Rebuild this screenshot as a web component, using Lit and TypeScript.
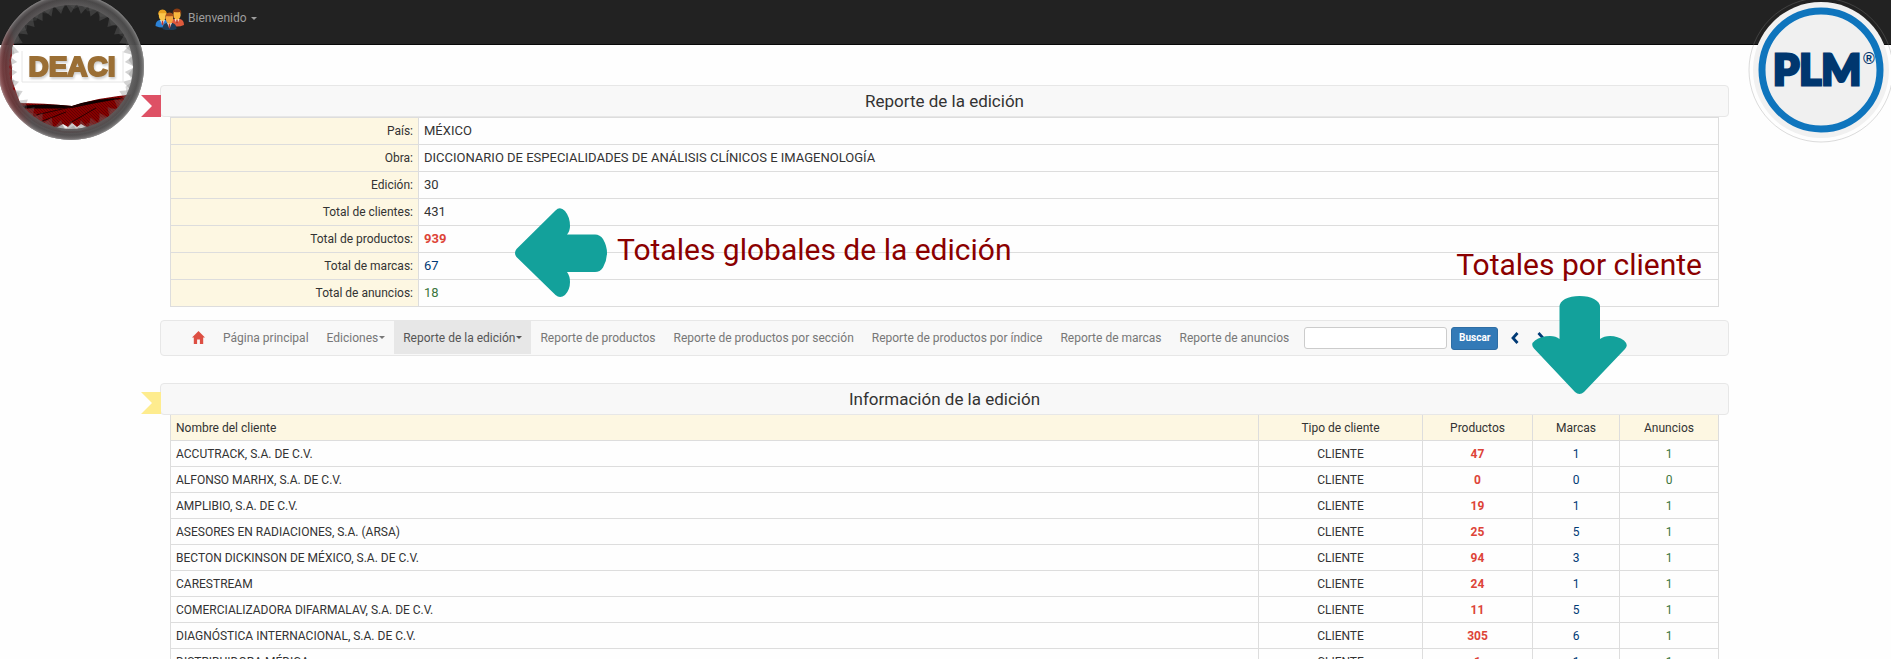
import { LitElement, html, svg, css } from "lit";
import { customElement } from "lit/decorators.js";

interface Client {
  name: string;
  products: number;
  brands: number;
  ads: number;
}

const CLIENTS: Client[] = [
  { name: "ACCUTRACK, S.A. DE C.V.", products: 47, brands: 1, ads: 1 },
  { name: "ALFONSO MARHX, S.A. DE C.V.", products: 0, brands: 0, ads: 0 },
  { name: "AMPLIBIO, S.A. DE C.V.", products: 19, brands: 1, ads: 1 },
  { name: "ASESORES EN RADIACIONES, S.A. (ARSA)", products: 25, brands: 5, ads: 1 },
  { name: "BECTON DICKINSON DE MÉXICO, S.A. DE C.V.", products: 94, brands: 3, ads: 1 },
  { name: "CARESTREAM", products: 24, brands: 1, ads: 1 },
  { name: "COMERCIALIZADORA DIFARMALAV, S.A. DE C.V.", products: 11, brands: 5, ads: 1 },
  { name: "DIAGNÓSTICA INTERNACIONAL, S.A. DE C.V.", products: 305, brands: 6, ads: 1 },
  { name: "DISTRIBUIDORA MÉDICA", products: 1, brands: 1, ads: 1 },
];

const SUMMARY = [
  { label: "País:", value: "MÉXICO", tone: "" },
  { label: "Obra:", value: "DICCIONARIO DE ESPECIALIDADES DE ANÁLISIS CLÍNICOS E IMAGENOLOGÍA", tone: "" },
  { label: "Edición:", value: "30", tone: "" },
  { label: "Total de clientes:", value: "431", tone: "" },
  { label: "Total de productos:", value: "939", tone: "red" },
  { label: "Total de marcas:", value: "67", tone: "blue" },
  { label: "Total de anuncios:", value: "18", tone: "green" },
];

const LINKS = [
  { text: "Página principal", menu: false, active: false },
  { text: "Ediciones", menu: true, active: false },
  { text: "Reporte de la edición", menu: true, active: true },
  { text: "Reporte de productos", menu: false, active: false },
  { text: "Reporte de productos por sección", menu: false, active: false },
  { text: "Reporte de productos por índice", menu: false, active: false },
  { text: "Reporte de marcas", menu: false, active: false },
  { text: "Reporte de anuncios", menu: false, active: false },
];

/** Saw-toothed inner edge of the DEACI seal. */
function teeth(cx: number, cy: number, outer: number, inner: number, count: number): string {
  const points: string[] = [];
  for (let i = 0; i < count * 2; i++) {
    const angle = (Math.PI * i) / count;
    const r = i % 2 ? inner : outer;
    points.push(`${(cx + r * Math.cos(angle)).toFixed(1)} ${(cy + r * Math.sin(angle)).toFixed(1)}`);
  }
  return `M${points.join("L")}Z`;
}

const disc = (cx: number, cy: number, r: number) =>
  `M${cx - r} ${cy}a${r} ${r} 0 1 0 ${2 * r} 0a${r} ${r} 0 1 0 ${-2 * r} 0Z`;

const deaciLogo = html`<svg class="deaci" width="146" height="142" viewBox="0 0 146 142" role="img" aria-label="DEACI">
  <defs>
    <linearGradient id="ring" x1="0" y1="0.55" x2="1" y2="0.35">
      <stop offset="0" stop-color="#8a2a2e" />
      <stop offset="0.07" stop-color="#6b2225" />
      <stop offset="0.16" stop-color="#4c4446" />
      <stop offset="1" stop-color="#4e4e4e" />
    </linearGradient>
    <radialGradient id="rim" cx="71" cy="67" r="74" gradientUnits="userSpaceOnUse">
      <stop offset="0.84" stop-color="#777" stop-opacity="0.35" />
      <stop offset="0.92" stop-color="#444" stop-opacity="0.3" />
      <stop offset="0.96" stop-color="#888" stop-opacity="0.35" />
      <stop offset="1" stop-color="#ccc" stop-opacity="0.7" />
    </radialGradient>
    <pattern id="weave" width="3" height="3" patternUnits="userSpaceOnUse">
      <rect width="3" height="3" fill="#860000" />
      <path d="M0 0L3 3" stroke="#5c0000" stroke-width="0.8" />
    </pattern>
    <clipPath id="seal"><circle cx="71" cy="67" r="66" /></clipPath>
  </defs>
  <g clip-path="url(#seal)">
    <path d="M0 22L10 24L14 45L11 60L14 85L22 103L8 110L0 100Z" fill="#850d10" />
    <path d="M12 45h128v50L72 106L20 103L12 80Z" fill="#fff" />
    <path d="M14 103Q45 103 72 106Q100 97 136 94V142H14Z" fill="url(#weave)" />
    <path d="M18 106Q50 103 72 106Q95 98 125 98Q100 102 72 108Q45 109 18 108Z" fill="#100000" />
    <path d="M36 115L84 104M96 108L70 123M40 122L66 112" stroke="#2b0000" stroke-width="1" fill="none" />
    <path d="M56 128L63 124L68 127L72 123L77 127L81 124L88 128L80 131H62Z" fill="#eee" />
  </g>
  <path d="${disc(71, 67, 73)}${teeth(71, 67, 64, 54, 34)}" fill-rule="evenodd" fill="#777" fill-opacity="0.32" />
  <path d="${disc(71, 67, 73)}${teeth(71, 67, 63, 58, 27)}" fill-rule="evenodd" fill="#666" fill-opacity="0.25" />
  <path d="${disc(71, 67, 73)}${disc(71, 67, 62)}" fill-rule="evenodd" fill="url(#ring)" fill-opacity="0.88" />
  <path d="${disc(71, 67, 73)}${disc(71, 67, 62)}" fill-rule="evenodd" fill="url(#rim)" />
  <path d="M22 51V82H123V51" fill="none" stroke="#e6e6e6" />
  <text class="deaci-text" x="72" y="76" text-anchor="middle">DEACI</text>
</svg>`;

const plmLogo = html`<svg class="plm" width="146" height="144" viewBox="0 0 146 144" role="img" aria-label="PLM">
  <circle cx="73" cy="70" r="72" fill="none" stroke="#888" stroke-opacity="0.3" />
  <circle cx="73" cy="70" r="68" fill="#f1f1f1" />
  <circle cx="73" cy="70" r="59" fill="#f0f0f0" stroke="#0f75bd" stroke-width="7" />
  <text class="plm-text" x="69" y="85" text-anchor="middle">PLM</text>
  <text class="plm-mark" x="121" y="64" text-anchor="middle">®</text>
</svg>`;

const person = (x: number, y: number, hair: string, coat: string, skin: string) => svg`
  <g transform="translate(${x} ${y})">
    <path d="M-7 14Q-7 9 -3 8H3Q7 9 7 14Q0 17 -7 14Z" fill=${coat} />
    <path d="M-2.4 8L0 13.5L2.4 8Z" fill="#f3f3f3" />
    <path d="M-0.7 8.6h1.4L1 12L0 13.4L-1 12Z" fill="#c0392b" />
    <path d="M-3.6 1.5Q-3.6 -1 0 -1Q3.6 -1 3.6 1.5V4.5Q3 8.6 0 8.8Q-3 8.6 -3.6 4.5Z" fill=${skin} />
    <path d="M-4.2 3.5Q-5 -2.4 0 -2.6Q5 -2.4 4.2 3.5L3 1Q0 1.6 -3 1Z" fill=${hair} />
  </g>`;

const peopleIcon = html`<svg width="30" height="22" viewBox="0 0 30 22" aria-hidden="true">
  ${person(7.5, 4, "#e8a020", "#2c82d6", "#fbc64b")}
  ${person(22, 3, "#8a3c12", "#dd5a3c", "#f9b63e")}
  ${person(14.5, 7, "#a8501c", "#1d3c58", "#f5a640")}
</svg>`;

const homeIcon = html`<svg width="13" height="13" viewBox="0 0 13 13" aria-hidden="true">
  <path d="M6.5 0L13 6.6H11.2V13H7.9V8.6H5.1V13H1.8V6.6H0Z" fill="#dd4f43" />
</svg>`;

const chevron = (d: string) => html`<svg width="8" height="12" viewBox="0 0 8 12" aria-hidden="true">
  <path d=${d} fill="none" stroke="#003a75" stroke-width="2.8" />
</svg>`;

@customElement("app-root")
export class AppRoot extends LitElement {
  static styles = css`
    :host {
      display: block;
      height: 100vh;
      overflow: hidden;
      background: #fefefe;
      color: #333;
      font: 12px/18px Roboto, "Noto Sans", sans-serif;
    }
    * { box-sizing: border-box; }
    a { color: inherit; text-decoration: none; }
    .top {
      position: relative;
      display: flex;
      height: 45px;
      padding: 8px 155px;
      background: #222;
      border-bottom: 1px solid #080808;
      color: #9d9d9d;
    }
    .welcome { display: flex; align-items: flex-start; gap: 3px; line-height: 20px; }
    .caret {
      display: inline-block;
      margin-left: 1px;
      border: 3px solid transparent;
      border-top: 3px solid currentColor;
      border-bottom: 0;
      vertical-align: middle;
    }
    .deaci { position: absolute; left: 0; top: 0; z-index: 2; }
    .plm { position: absolute; right: -3px; top: 0; z-index: 2; }
    .deaci-text {
      font: bold 28px "Liberation Sans", sans-serif;
      fill: #9b6f35;
      stroke: #9b6f35;
      stroke-width: 2px;
      filter: drop-shadow(1px 2px 1px #ccc);
    }
    .plm-text {
      font: 900 42px Lato, sans-serif;
      fill: #00376f;
      stroke: #00376f;
      stroke-width: 3px;
    }
    .plm-mark { font: bold 16px "Liberation Sans", sans-serif; fill: #00376f; }
    main { margin: 0 162px 0 160px; padding-top: 40px; }
    .report { position: relative; padding-bottom: 13px; }
    .title {
      position: relative;
      height: 32px;
      margin: 0;
      border: 1px solid #e7e7e7;
      border-radius: 4px;
      background: #f8f8f8;
      font-size: 17px;
      font-weight: 400;
      line-height: 31px;
      text-align: center;
    }
    .ribbon {
      position: absolute;
      left: -20px;
      top: 9px;
      width: 20px;
      height: 22px;
      background: #de5165;
      clip-path: polygon(0 0, 100% 0, 100% 100%, 0 100%, 55% 50%);
    }
    .ribbon.yellow { background: #feec8e; top: 8px; }
    .body { padding: 0 10px; }
    table { width: 100%; border-collapse: collapse; table-layout: fixed; }
    th, td { border: 1px solid #ddd; padding: 4px 5px; font-weight: 400; }
    th { background: #fdf7e2; }
    .summary th { width: 248px; text-align: right; }
    .summary td { font-size: 13px; }
    .clients { line-height: 17px; }
    .clients thead th { border-top: 0; }
    .clients th, .clients td { padding: 5px 5px 3px; text-align: center; }
    .clients .name { text-align: left; }
    .type { width: 164px; }
    .products { width: 110px; }
    .brands { width: 87px; }
    .ads { width: 99px; }
    td.red { color: #dd4438; font-weight: 700; }
    td.blue { color: #003a75; }
    td.green { color: #3c763d; }
    .menu {
      display: flex;
      align-items: center;
      height: 36px;
      margin-bottom: 27px;
      padding-left: 22px;
      border: 1px solid #e7e7e7;
      border-radius: 4px;
      background: #f8f8f8;
      color: #777;
      white-space: nowrap;
    }
    .menu ul { display: flex; align-self: stretch; margin: 0; padding: 0; list-style: none; }
    .menu li { display: flex; }
    .menu li a { display: flex; align-items: center; height: 33px; padding: 0 9px; }
    .menu li a.active { background: #e7e7e7; color: #555; }
    .search { display: flex; align-items: center; gap: 4px; margin-left: 6px; }
    .search input {
      width: 143px;
      height: 22px;
      padding: 0 6px;
      border: 1px solid #ccc;
      border-radius: 3px;
      background: #fff;
      font: inherit;
    }
    .search button {
      width: 47px;
      height: 23px;
      padding: 0;
      border: 1px solid #2e6da4;
      border-radius: 3px;
      background: #337ab7;
      color: #fff;
      font: bold 10px/20px Roboto, sans-serif;
    }
    .pager { display: flex; gap: 18px; margin-left: 13px; }
    .pager a { display: flex; }
    .note {
      position: absolute;
      z-index: 1;
      display: flex;
      color: #8b0000;
      font-size: 30px;
      line-height: 36px;
      white-space: nowrap;
      pointer-events: none;
    }
    .note svg { fill: #13a19b; }
    .note.global { left: 355px; top: 123px; gap: 10px; }
    .note.global span { padding-top: 24px; }
    .note.client { right: 27px; top: 162px; flex-direction: column; gap: 13px; }
    .note.client svg { align-self: flex-end; margin-right: 75px; }
  `;

  render() {
    return html`
      <header class="top">
        <a class="welcome" href="#">${peopleIcon}<span>Bienvenido <i class="caret"></i></span></a>
        ${deaciLogo}${plmLogo}
      </header>
      <main>
        <section class="report">
          <h1 class="title"><i class="ribbon"></i>Reporte de la edición</h1>
          <div class="body">
            <table class="summary">
              ${SUMMARY.map(
                (row) => html`<tr><th scope="row">${row.label}</th><td class=${row.tone}>${row.value}</td></tr>`
              )}
            </table>
          </div>
          <div class="note global">
            <svg width="92" height="89" viewBox="0 0 92 89" aria-hidden="true">
              <path d="M1.5 41L40.500 2.500Q45-2 50 3Q55 9 55 18Q55 23 52 26.500H80Q85 26.500 88 31Q92 38 92 45Q92 52 88 59.500Q85 64 80 64H52Q55 68 55 74Q55 82 50 87Q45 91 40.500 87L1.500 49Q-1.500 45 1.500 41Z" />
            </svg>
            <span>Totales globales de la edición</span>
          </div>
          <div class="note client">
            <span>Totales por cliente</span>
            <svg width="95" height="98" viewBox="0 0 95 98" aria-hidden="true">
              <path d="M43 96L2 52.500Q-2 48 3 44.500Q9 40 18 40Q24 40 27.500 43V11Q27.500 6 33 3Q39 0 47.500 0Q57 0 62 3Q68 6 68 11V43Q72 40 78 40Q86 40 92 44.500Q97 49 93 53L52 96Q47.500 100 43 96Z" />
            </svg>
          </div>
        </section>
        <nav class="menu">
          <ul>
            <li><a href="#" aria-label="Inicio">${homeIcon}</a></li>
            ${LINKS.map(
              (link) => html`<li><a href="#" class=${link.active ? "active" : ""}>${link.text}${
                link.menu ? html`<i class="caret"></i>` : ""}</a></li>`
            )}
          </ul>
          <form class="search">
            <input type="text" aria-label="Buscar" />
            <button type="button">Buscar</button>
          </form>
          <div class="pager">
            <a href="#" aria-label="Anterior">${chevron("M6.500 1L2 6L6.500 11")}</a>
            <a href="#" aria-label="Siguiente">${chevron("M1.500 1L6 6L1.500 11")}</a>
          </div>
        </nav>
        <section>
          <h2 class="title"><i class="ribbon yellow"></i>Información de la edición</h2>
          <div class="body">
            <table class="clients">
              <thead>
                <tr>
                  <th class="name">Nombre del cliente</th>
                  <th class="type">Tipo de cliente</th>
                  <th class="products">Productos</th>
                  <th class="brands">Marcas</th>
                  <th class="ads">Anuncios</th>
                </tr>
              </thead>
              <tbody>
                ${CLIENTS.map(
                  (c) => html`<tr>
                    <td class="name">${c.name}</td>
                    <td>CLIENTE</td>
                    <td class="red">${c.products}</td>
                    <td class="blue">${c.brands}</td>
                    <td class="green">${c.ads}</td>
                  </tr>`
                )}
              </tbody>
            </table>
          </div>
        </section>
      </main>
    `;
  }
}
